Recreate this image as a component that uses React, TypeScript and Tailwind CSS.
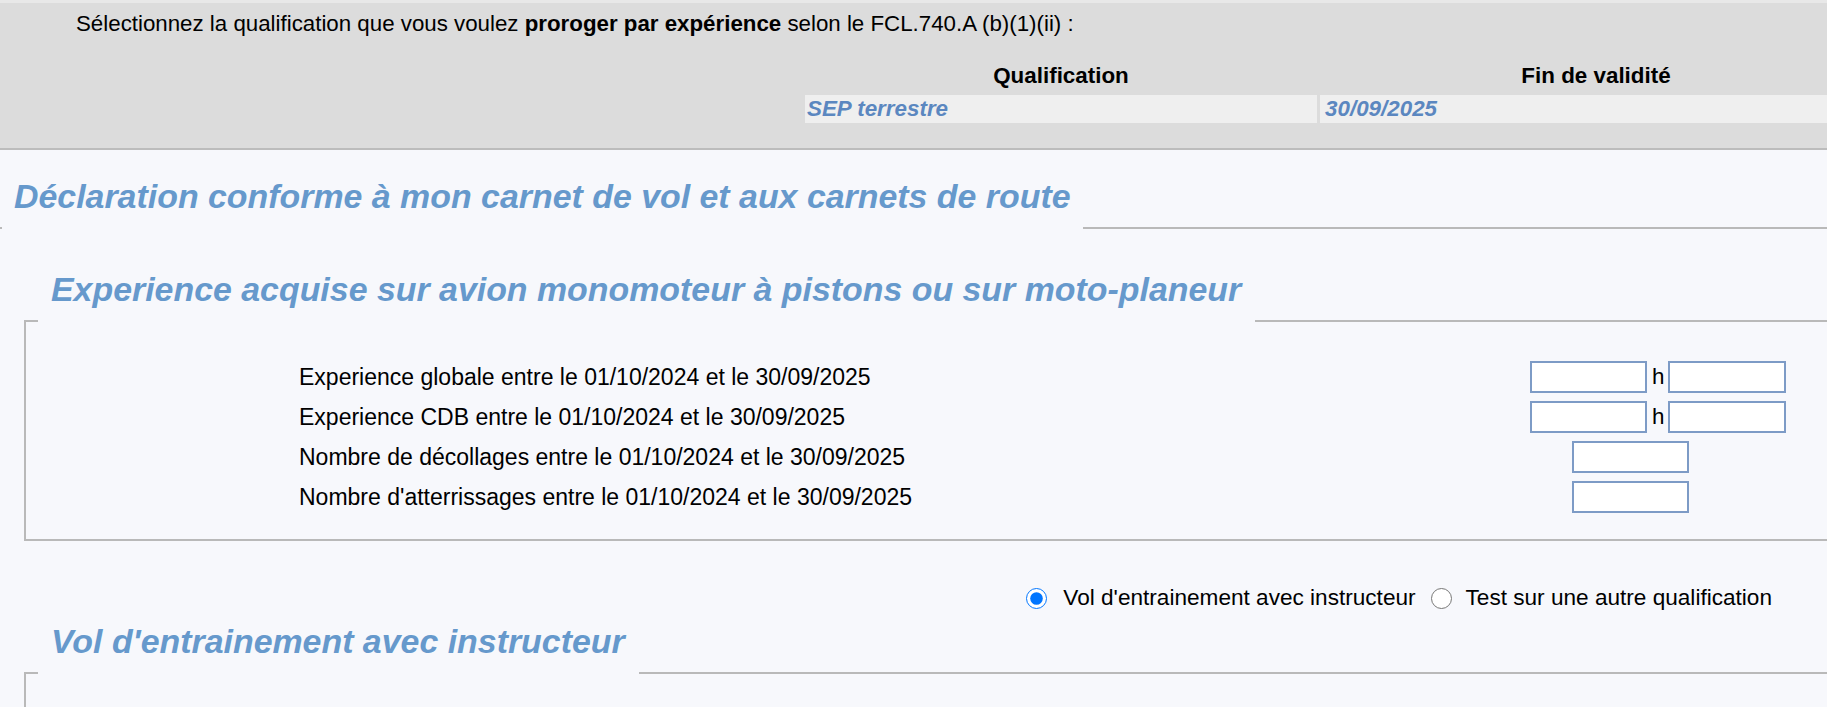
import React from "react";

const font = { fontFamily: '"Liberation Sans", Arial, sans-serif' };

interface ExperienceRow {
  label: string;
  hours: boolean;
}

const rows: ExperienceRow[] = [
  { label: "Experience globale entre le 01/10/2024 et le 30/09/2025", hours: true },
  { label: "Experience CDB entre le 01/10/2024 et le 30/09/2025", hours: true },
  { label: "Nombre de décollages entre le 01/10/2024 et le 30/09/2025", hours: false },
  { label: "Nombre d'atterrissages entre le 01/10/2024 et le 30/09/2025", hours: false },
];

const Box = ({ className = "" }: { className?: string }) => (
  <input
    type="text"
    className={`h-[32px] w-[117px] border-2 border-[#7d9bc6] bg-white outline-none ${className}`}
  />
);

// legend-like heading with a line running off to the right
const SectionTitle = ({ title, inset }: { title: string; inset: boolean }) => (
  <div className="flex items-end">
    <div className={inset ? "h-[2px] w-[14px] bg-[#b9b9b9]" : "h-[2px] w-[2px] bg-[#b9b9b9]"} />
    <h2
      className={`${
        inset ? "pl-[13px] pr-[14px]" : "pl-[12px] pr-[12px]"
      } pb-[13px] text-[33.9px] font-bold italic leading-[40px] text-[#6699cc]`}
    >
      {title}
    </h2>
    <div className="h-[2px] flex-1 bg-[#b9b9b9]" />
  </div>
);

export default function App() {
  return (
    <div className="min-h-screen w-full overflow-hidden bg-[#f7f8fc] text-black" style={font}>
      <div className="h-[150px] border-t-[3px] border-b-2 border-t-[#e8e8e8] border-b-[#bcbcbc] bg-[#dcdcdc]">
        <p className="pl-[76px] pt-[8px] text-[22.3px] leading-[26px]">
          Sélectionnez la qualification que vous voulez <b>proroger par expérience</b> selon le
          FCL.740.A (b)(1)(ii) :
        </p>
        <div className="ml-[805px] mt-[25px] grid w-[1070px] grid-cols-[512px_552px] gap-x-[3px] gap-y-[5px]">
          <div className="h-[28px] text-center text-[22.4px] font-bold leading-[28px]">Qualification</div>
          <div className="h-[28px] text-center text-[22.4px] font-bold leading-[28px]">Fin de validité</div>
          <div className="h-[28px] bg-[#efefef] pl-[2px] text-[22.4px] font-bold italic leading-[28px] text-[#5b87c0]">
            SEP terrestre
          </div>
          <div className="h-[28px] bg-[#efefef] pl-[5px] text-[22.4px] font-bold italic leading-[28px] text-[#5b87c0]">
            30/09/2025
          </div>
        </div>
      </div>

      <div className="mt-[26px]">
        <SectionTitle title="Déclaration conforme à mon carnet de vol et aux carnets de route" inset={false} />
      </div>

      <div className="ml-[24px] mt-[40px]">
        <SectionTitle title="Experience acquise sur avion monomoteur à pistons ou sur moto-planeur" inset />
        <div className="border-b-2 border-l-2 border-[#b9b9b9] pb-[22px] pt-[35px]">
          {rows.map((row) => (
            <div key={row.label} className="flex h-[40px] items-center pr-[41px]">
              <div className="flex-1 pl-[273px] text-[23px] leading-[26px]">{row.label}</div>
              <div className="flex w-[256px] items-center">
                {row.hours ? (
                  <>
                    <Box />
                    <span className="w-[21px] pl-[5px] text-[22.4px] leading-[26px]">h</span>
                    <Box className="w-[118px]" />
                  </>
                ) : (
                  <Box className="ml-[42px]" />
                )}
              </div>
            </div>
          ))}
        </div>
      </div>

      <div className="mt-[42px] flex h-[30px] items-center justify-end pr-[55px] text-[22.6px] leading-[26px]">
        <label className="flex items-center">
          <input type="radio" name="mode" defaultChecked className="m-0 h-[21px] w-[21px] accent-[#0075ff]" />
          <span className="ml-[16px]">Vol d'entrainement avec instructeur</span>
        </label>
        <label className="ml-[15px] flex items-center">
          <input type="radio" name="mode" className="m-0 h-[21px] w-[21px]" />
          <span className="ml-[14px]">Test sur une autre qualification</span>
        </label>
      </div>

      <div className="ml-[24px] mt-[8px]">
        <SectionTitle title="Vol d'entrainement avec instructeur" inset />
        <div className="h-[60px] border-l-2 border-[#b9b9b9]" />
      </div>
    </div>
  );
}
